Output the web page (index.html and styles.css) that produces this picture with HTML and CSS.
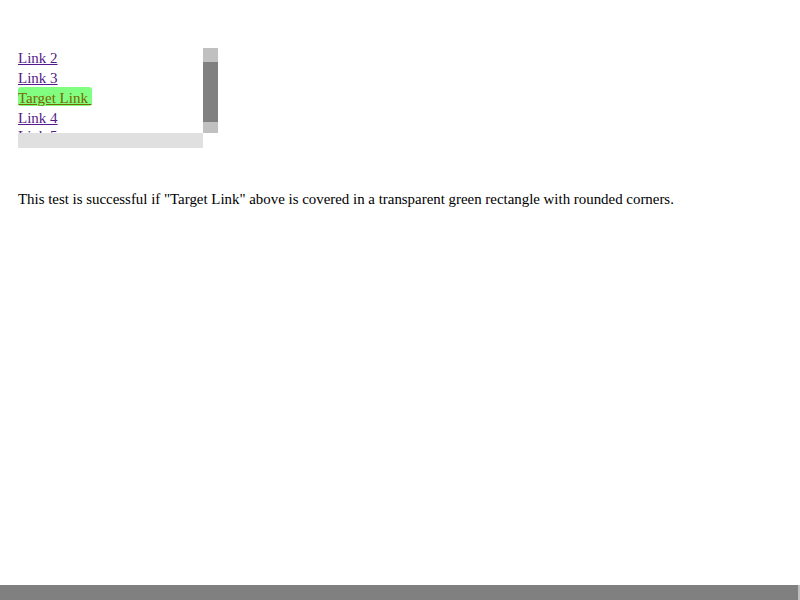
FILE: index.html
```html
<!DOCTYPE html>
<html>
<head>
<meta charset="utf-8">
<link rel="stylesheet" href="styles.css">
</head>
<body>
<div class="page">
  <div class="scrollbox">
    <div class="viewport">
      <a class="link" href="#">Link 2</a>
      <a class="link" href="#">Link 3</a>
      <div class="row"><a class="link target" href="#">Target Link </a></div>
      <a class="link" href="#">Link 4</a>
      <a class="link peek" href="#">Link 5</a>
      <a class="link" href="#">Link 6</a>
    </div>
    <div class="vbar"><div class="vthumb"></div></div>
    <div class="hbar"></div>
    <div class="corner"></div>
  </div>
  <p class="note">This test is successful if "Target Link" above is covered in a transparent green rectangle with rounded corners.</p>
</div>
<div class="pagebar"><div class="pagethumb"></div><div class="pagetrack"></div></div>
</body>
</html>
```
FILE: styles.css
```css
html, body {
  margin: 0;
  padding: 0;
  background: #ffffff;
}
body {
  font-family: "Liberation Serif", "Times New Roman", serif;
  font-size: 15px;
  color: #000000;
}
.page {
  padding: 48px 0 0 18px;
}
.scrollbox {
  display: grid;
  grid-template-columns: 185px 15px;
  grid-template-rows: 85px 15px;
  width: 200px;
}
.viewport {
  overflow: hidden;
  display: flex;
  flex-direction: column;
  align-items: flex-start;
}
.link {
  display: block;
  flex-shrink: 0;
  line-height: 20px;
  height: 20px;
  color: #551a8b;
  text-decoration: underline;
  white-space: pre;
}
.peek {
  margin-top: -2px;
}
.row {
  flex-shrink: 0;
  height: 20px;
  display: flex;
  align-items: flex-start;
}
.target {
  display: inline-block;
  box-sizing: border-box;
  margin-top: -1px;
  padding-top: 1px;
  height: 19px;
  line-height: 20px;
  background: #80ff80;
  color: #7a6600;
  border-radius: 3px;
  overflow: hidden;
}
.vbar {
  background: #c0c0c0;
  padding-top: 14px;
}
.vthumb {
  height: 60px;
  background: #808080;
}
.hbar {
  background: #e0e0e0;
}
.corner {
  background: #ffffff;
}
.note {
  margin: 42px 0 0 0;
  line-height: 18px;
  font-size: 14.9px;
}
.pagebar {
  position: fixed;
  left: 0;
  right: 0;
  bottom: 0;
  height: 15px;
  display: flex;
}
.pagethumb {
  flex: 1;
  background: #808080;
}
.pagetrack {
  width: 2px;
  background: #c0c0c0;
}
```
